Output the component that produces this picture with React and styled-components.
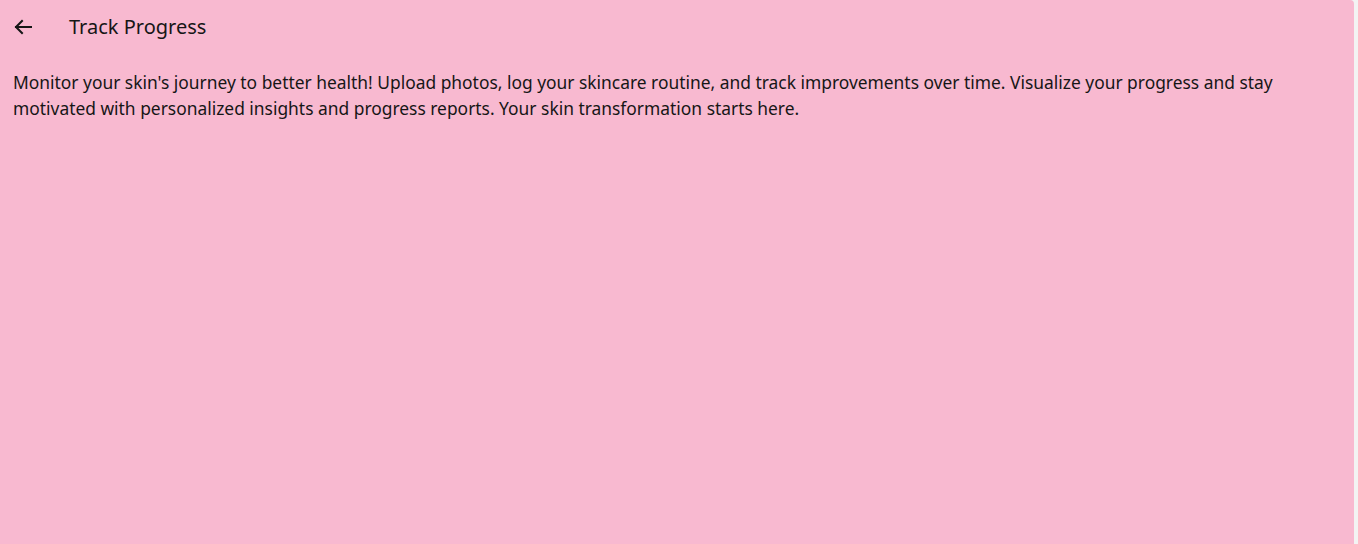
import React from "react";
import styled, { createGlobalStyle } from "styled-components";

const Global = createGlobalStyle`
  html, body { margin: 0; padding: 0; background: #f3f3f3; }
  body { font-family: "Noto Sans", "Segoe UI", sans-serif; }
`;

const Page = styled.div`
  width: 1354px;
  height: 544px;
  background: #f8b9d0;
  border-top-right-radius: 4px;
  box-sizing: border-box;
  padding: 0 13px;
  color: #161616;
`;

const Header = styled.header`
  display: flex;
  align-items: center;
  height: 53px;
  gap: 36px;
`;

const BackButton = styled.button`
  display: flex;
  align-items: center;
  justify-content: center;
  width: 20px;
  height: 20px;
  padding: 0;
  border: none;
  background: transparent;
  color: #161616;
  cursor: pointer;
`;

const Title = styled.h1`
  margin: 0;
  font-size: 20px;
  font-weight: 400;
`;

const Description = styled.p`
  margin: 16px 0 0;
  font-size: 17.4px;
  line-height: 26px;
`;

export default function App() {
  return (
    <>
      <Global />
      <Page>
        <Header>
          <BackButton aria-label="Back">
            <svg width="18" height="16" viewBox="0 0 18 16" fill="none" stroke="currentColor" strokeWidth="2" strokeLinecap="square">
              <path d="M17 8H2" />
              <path d="M8 2L2 8l6 6" />
            </svg>
          </BackButton>
          <Title>Track Progress</Title>
        </Header>
        <Description>
          Monitor your skin's journey to better health! Upload photos, log your skincare routine, and track improvements over time. Visualize your progress and stay motivated with personalized insights and progress reports. Your skin transformation starts here.
        </Description>
      </Page>
    </>
  );
}
